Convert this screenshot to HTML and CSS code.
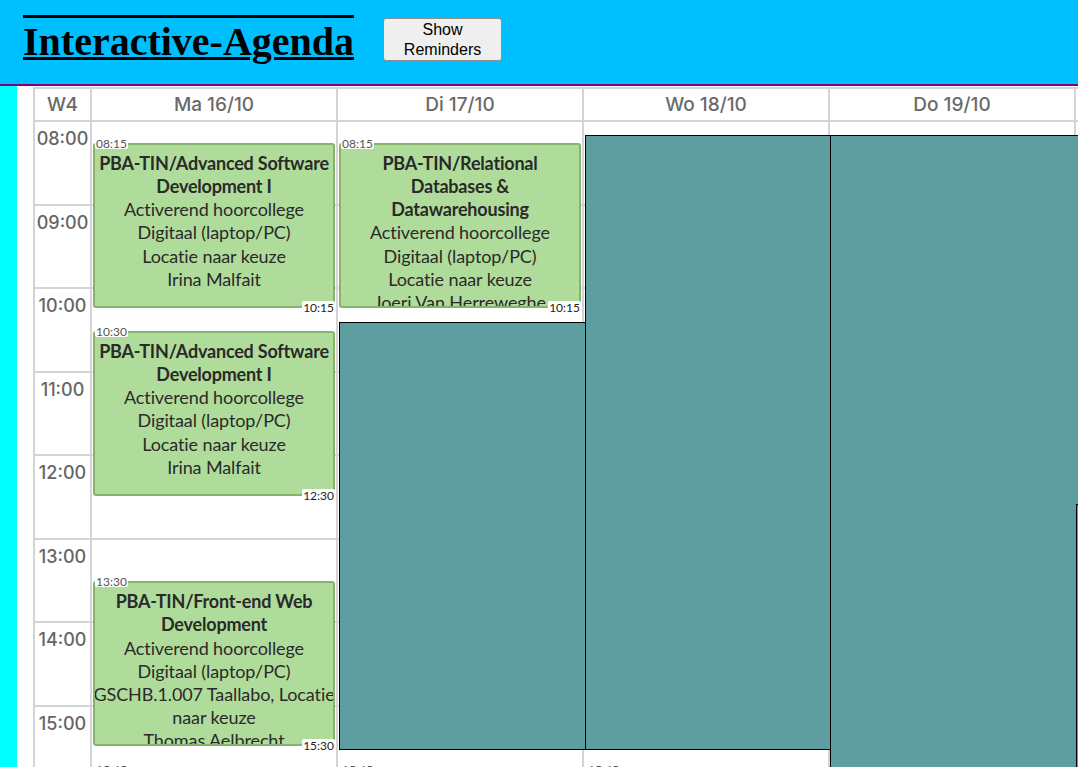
FILE: index.html
```html
<!DOCTYPE html>
<html lang="nl">
<head>
<meta charset="utf-8">
<title>Interactive-Agenda</title>
<link rel="stylesheet" href="styles.css">
</head>
<body>
<div class="app">
  <header class="topbar">
    <h1 class="title">Interactive-Agenda</h1>
    <button class="reminders-btn" type="button">Show Reminders</button>
  </header>
  <div class="shell">
    <div class="strip"></div>
    <main class="agenda">
      <div class="week">
        <div class="head-cell">W4</div>
        <div class="head-cell">Ma 16/10</div>
        <div class="head-cell">Di 17/10</div>
        <div class="head-cell">Wo 18/10</div>
        <div class="head-cell">Do 19/10</div>
        <div class="head-cell">Vr 20/10</div>

        <div class="time-col">
          <div class="hour"><span class="hour-label">08:00</span></div>
          <div class="hour"><span class="hour-label">09:00</span></div>
          <div class="hour"><span class="hour-label">10:00</span></div>
          <div class="hour"><span class="hour-label">11:00</span></div>
          <div class="hour"><span class="hour-label">12:00</span></div>
          <div class="hour"><span class="hour-label">13:00</span></div>
          <div class="hour"><span class="hour-label">14:00</span></div>
          <div class="hour"><span class="hour-label">15:00</span></div>
          <div class="hour"><span class="hour-label">16:00</span></div>
          <div class="hour"><span class="hour-label">17:00</span></div>
        </div>

        <div class="day-col">
          <div class="hour"></div><div class="hour"></div><div class="hour"></div><div class="hour"></div><div class="hour"></div>
          <div class="hour"></div><div class="hour"></div><div class="hour"></div><div class="hour"></div><div class="hour"></div>
          <div class="event" style="top:20.875px;height:165px">
            <div class="event-body">
              <div class="event-text">
                <div class="event-title">PBA-TIN/Advanced Software Development I</div>
                <div>Activerend hoorcollege</div>
                <div>Digitaal (laptop/PC)</div>
                <div>Locatie naar keuze</div>
                <div>Irina Malfait</div>
              </div>
            </div>
            <span class="time-start">08:15</span>
            <span class="time-end">10:15</span>
          </div>
          <div class="event" style="top:208.75px;height:165px">
            <div class="event-body">
              <div class="event-text">
                <div class="event-title">PBA-TIN/Advanced Software Development I</div>
                <div>Activerend hoorcollege</div>
                <div>Digitaal (laptop/PC)</div>
                <div>Locatie naar keuze</div>
                <div>Irina Malfait</div>
              </div>
            </div>
            <span class="time-start">10:30</span>
            <span class="time-end">12:30</span>
          </div>
          <div class="event" style="top:459.25px;height:165px">
            <div class="event-body">
              <div class="event-text">
                <div class="event-title">PBA-TIN/Front-end Web Development</div>
                <div>Activerend hoorcollege</div>
                <div>Digitaal (laptop/PC)</div>
                <div>GSCHB.1.007 Taallabo, Locatie naar keuze</div>
                <div>Thomas Aelbrecht</div>
              </div>
            </div>
            <span class="time-start">13:30</span>
            <span class="time-end">15:30</span>
          </div>
          <div class="event" style="top:647.1px;height:165px">
            <div class="event-body"></div>
            <span class="time-start">15:45</span>
          </div>
        </div>

        <div class="day-col">
          <div class="hour"></div><div class="hour"></div><div class="hour"></div><div class="hour"></div><div class="hour"></div>
          <div class="hour"></div><div class="hour"></div><div class="hour"></div><div class="hour"></div><div class="hour"></div>
          <div class="event" style="top:20.875px;height:165px">
            <div class="event-body">
              <div class="event-text">
                <div class="event-title">PBA-TIN/Relational Databases &amp; Datawarehousing</div>
                <div>Activerend hoorcollege</div>
                <div>Digitaal (laptop/PC)</div>
                <div>Locatie naar keuze</div>
                <div>Joeri Van Herreweghe</div>
              </div>
            </div>
            <span class="time-start">08:15</span>
            <span class="time-end">10:15</span>
          </div>
          <div class="event" style="top:647.1px;height:165px">
            <div class="event-body"></div>
            <span class="time-start">15:45</span>
          </div>
        </div>

        <div class="day-col">
          <div class="hour"></div><div class="hour"></div><div class="hour"></div><div class="hour"></div><div class="hour"></div>
          <div class="hour"></div><div class="hour"></div><div class="hour"></div><div class="hour"></div><div class="hour"></div>
          <div class="event" style="top:647.1px;height:165px">
            <div class="event-body"></div>
            <span class="time-start">15:45</span>
          </div>
        </div>

        <div class="day-col">
          <div class="hour"></div><div class="hour"></div><div class="hour"></div><div class="hour"></div><div class="hour"></div>
          <div class="hour"></div><div class="hour"></div><div class="hour"></div><div class="hour"></div><div class="hour"></div>
        </div>

        <div class="day-col">
          <div class="hour"></div><div class="hour"></div><div class="hour"></div><div class="hour"></div><div class="hour"></div>
          <div class="hour"></div><div class="hour"></div><div class="hour"></div><div class="hour"></div><div class="hour"></div>
        </div>
      </div>

      <div class="blocker blocker-di"></div>
      <div class="blocker blocker-wo"></div>
      <div class="blocker blocker-do"></div>
      <div class="blocker blocker-vr"></div>
    </main>
  </div>
</div>
</body>
</html>
```

FILE: styles.css
```css
html, body {
  margin: 0;
  height: 100%;
}

body {
  font-family: "Liberation Sans", Arial, sans-serif;
  background: #ffffff;
  overflow: hidden;
}

.app {
  display: flex;
  flex-direction: column;
  height: 100vh;
}

/* ---------- top bar ---------- */
.topbar {
  flex-shrink: 0;
  display: flex;
  align-items: flex-start;
  gap: 29px;
  height: 84px;
  padding-left: 23px;
  background: #00bfff;
  border-bottom: 2px solid #800080;
}

.title {
  margin: 15px 0 0;
  border-top: 3px solid #000;
  font-family: "Liberation Serif", "Times New Roman", serif;
  font-weight: bold;
  font-size: 40px;
  line-height: 47px;
  color: #000;
  text-decoration: underline;
  text-decoration-thickness: 3px;
  text-underline-offset: 2px;
}

.reminders-btn {
  margin-top: 18px;
  width: 119px;
  height: 43px;
  padding: 0 6px;
  font-family: "Liberation Sans", Arial, sans-serif;
  font-size: 16px;
  line-height: 20px;
  color: #000;
  background: #efefef;
  border: 1px solid #8f8f8f;
  border-radius: 3px;
}

/* ---------- body ---------- */
.shell {
  flex: 1;
  min-height: 0;
  display: flex;
}

.strip {
  flex-shrink: 0;
  width: 17px;
  background: #00ffff;
}

.agenda {
  flex: 1;
  position: relative;
  overflow: hidden;
  padding: 1px 0 0 16px;
}

.week {
  display: grid;
  grid-template-columns: 57px repeat(5, 246px);
  width: max-content;
}

.head-cell {
  height: 35px;
  box-sizing: border-box;
  border-top: 2px solid #d4d4d4;
  border-left: 2px solid #d4d4d4;
  border-bottom: 2px solid #d4d4d4;
  display: flex;
  align-items: center;
  justify-content: center;
  font-family: Inter, "Noto Sans", sans-serif;
  font-weight: 500;
  font-size: 19px;
  color: #6a6a6a;
}

.time-col,
.day-col {
  border-left: 2px solid #d4d4d4;
}

.day-col {
  position: relative;
}

.hour {
  height: 83.5px;
  box-sizing: border-box;
  border-bottom: 2px solid #d4d4d4;
}

.time-col .hour {
  text-align: center;
  padding-top: 6px;
}

.hour-label {
  font-family: Inter, "Noto Sans", sans-serif;
  font-weight: 500;
  font-size: 18px;
  line-height: 22px;
  color: #666;
}

/* ---------- events ---------- */
.event {
  position: absolute;
  left: 1px;
  right: 1px;
}

.event-body {
  height: 100%;
  box-sizing: border-box;
  padding-top: 7px;
  background: #b0dc9b;
  border: 2px solid #86b46e;
  border-radius: 3px;
  overflow: hidden;
  text-align: center;
  font-family: Lato, "Open Sans", sans-serif;
  font-size: 18px;
  line-height: 23.2px;
  color: #2a2a2a;
}

.event-text {
  margin: 0 -4px;
  letter-spacing: -0.1px;
}

.event-title {
  padding: 0 4px;
  font-weight: 700;
  letter-spacing: -0.2px;
}

.time-start {
  position: absolute;
  left: 2px;
  top: -5px;
  padding: 0 1px;
  font-family: Lato, "Open Sans", sans-serif;
  font-size: 12px;
  line-height: 11px;
  color: #555;
  background: #fff;
  border-radius: 2px;
}

.time-end {
  position: absolute;
  right: 0;
  bottom: -6px;
  padding: 0 1px;
  font-family: Lato, "Open Sans", sans-serif;
  font-size: 12px;
  line-height: 13px;
  color: #222;
  background: #fff;
  border-radius: 2px;
}

/* ---------- blocked overlays ---------- */
.blocker {
  position: absolute;
  box-sizing: border-box;
  background: #5f9ea0;
  border: 1px solid #000;
}

.blocker-di { left: 322px; top: 236px; width: 248px; height: 428px; }
.blocker-wo { left: 568px; top: 49px;  width: 246px; height: 615px; }
.blocker-do { left: 813px; top: 49px;  width: 400px; height: 800px; }
.blocker-vr { left: 1059px; top: 418px; width: 300px; height: 400px; }
```
